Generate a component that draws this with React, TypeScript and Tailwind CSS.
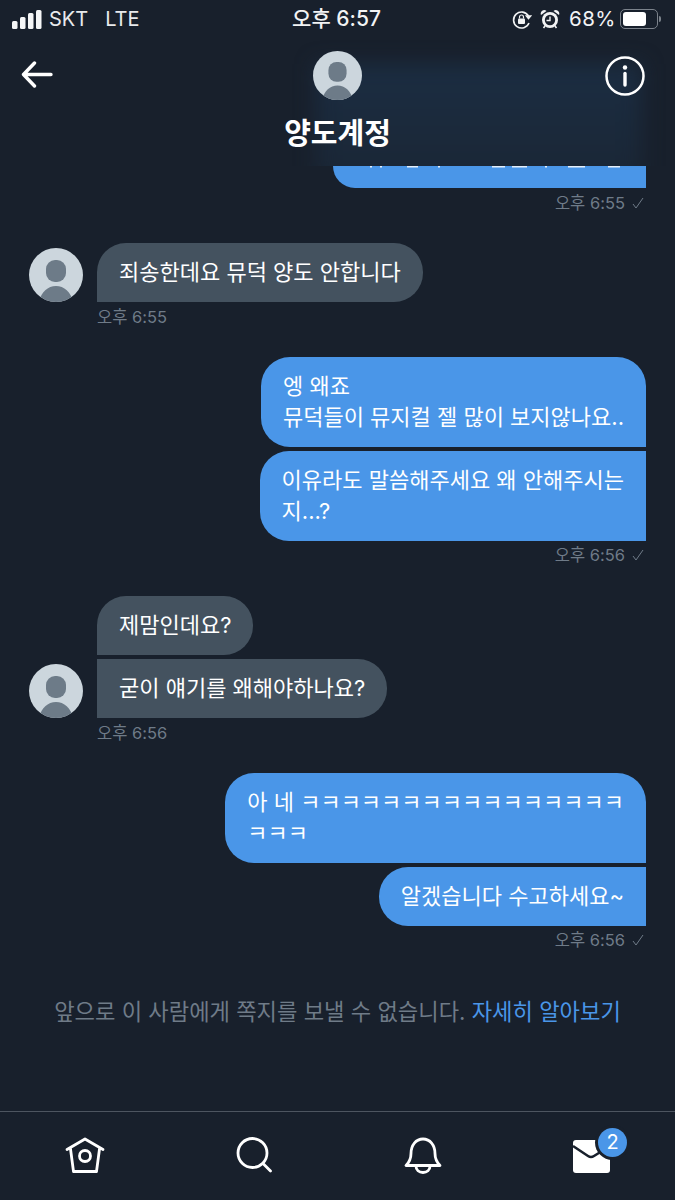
const FONT = "font-['Inter','Noto_Sans_CJK_KR',sans-serif]"

// 헤더에 가려진 윗줄 글자의 끝부분
const CLIPPED_MARKS = [
  [37, 2], [47, 2], [74, 11], [105, 2], [159, 13], [179, 15], [212, 2], [235, 17], [275, 12],
]

function Avatar({ size = 54 }: { size?: number }) {
  return (
    <svg width={size} height={size} viewBox="0 0 54 54" className="shrink-0">
      <clipPath id={`avatar-${size}`}>
        <circle cx="27" cy="27" r="27" />
      </clipPath>
      <g clipPath={`url(#avatar-${size})`}>
        <rect width="54" height="54" fill="#ccd6dd" />
        <rect x="17" y="12" width="20" height="22" rx="9" fill="#6d7b88" />
        <path d="M10 54c2-10 9-16 17-16s15 6 17 16z" fill="#6d7b88" />
      </g>
    </svg>
  )
}

function Time({ text, check, className = '' }: { text: string; check?: boolean; className?: string }) {
  return (
    <div className={`flex items-center gap-[7px] text-[16.5px] leading-[20px] text-[#6f7b88] ${className}`}>
      <span>{text}</span>
      {check && (
        <svg width="12" height="12" viewBox="0 0 12 12" fill="none" stroke="#6f7b88" strokeWidth="1" className="mr-[2px]">
          <path d="M1 7l3 4 7-10" />
        </svg>
      )}
    </div>
  )
}

function StatusBar() {
  return (
    <div className="flex h-[36px] items-center justify-between pl-[12px] pr-[14px] pt-[2px] text-white">
      <div className="flex w-[200px] items-center text-[20px] text-[#e8eaec]">
        <svg width="30" height="19" viewBox="0 0 30 19" fill="#f5f6f7">
          <rect x="0" y="11" width="5.500" height="8" rx="1.500" />
          <rect x="8" y="7" width="5.500" height="12" rx="1.500" />
          <rect x="16" y="3" width="5.500" height="16" rx="1.500" />
          <rect x="24" y="0" width="5.500" height="19" rx="1.500" />
        </svg>
        <span className="ml-[7px]">SKT</span>
        <span className="ml-[17px]">LTE</span>
      </div>
      <div className="text-[21px] font-medium text-[#f2f3f4]">오후 6:57</div>
      <div className="flex w-[200px] items-center justify-end">
        <svg width="21" height="21" viewBox="0 0 21 21" fill="none" stroke="#f2f3f4" strokeWidth="1.600">
          <path d="M17.500 7A8 8 0 1 0 18 14" />
          <path d="M15.500 7h4l-2 2.500z" fill="#f2f3f4" />
          <rect x="7" y="9.500" width="7" height="5.500" rx="1" fill="#f2f3f4" stroke="none" />
          <path d="M8.500 9.500V8a2 2 0 0 1 4 0v1.500" strokeWidth="1.200" />
        </svg>
        <svg width="20" height="20" viewBox="0 0 20 20" className="ml-[8px]">
          <circle cx="10" cy="11" r="8" fill="#f2f3f4" />
          <circle cx="10" cy="11" r="5.200" fill="#1a212c" />
          <path d="M10 7.500V11.500H6.500" stroke="#f2f3f4" strokeWidth="1.400" fill="none" />
          <path d="M1 6a3.500 3.500 0 0 1 5.500-4zM19 6a3.500 3.500 0 0 0-5.500-4z" fill="#f2f3f4" />
          <path d="M5 17l-1.500 2M15 17l1.500 2" stroke="#f2f3f4" strokeWidth="1.600" />
        </svg>
        <span className="ml-[9px] text-[20.5px] tracking-[0.5px] text-[#f2f3f4]">68%</span>
        <div className="ml-[4px] flex h-[20px] w-[38px] items-center rounded-[5px] border border-[#7b828b] p-[2px]">
          <div className="h-full w-[23px] rounded-[3px] bg-white" />
        </div>
        <div className="ml-[1px] h-[6px] w-[2px] rounded-r-sm bg-[#7b828b]" />
      </div>
    </div>
  )
}

function Header() {
  return (
    <div className="relative h-[130px]">
      <div className="absolute inset-0 overflow-hidden">
        <div className="absolute left-[316px] top-[28px] h-[120px] w-[326px] bg-gradient-to-b from-[#1b2d42] to-[#1a2635] blur-[10px]" />
      </div>
      <svg width="32" height="28" viewBox="0 0 32 28" fill="none" stroke="white" strokeWidth="3.400" strokeLinecap="round" strokeLinejoin="round" className="absolute left-[21px] top-[25px]">
        <path d="M30 13.500H3M13.500 2L2.500 13.500 13.500 25" />
      </svg>
      <svg width="40" height="40" viewBox="0 0 40 40" fill="none" stroke="white" className="absolute left-[605px] top-[20px]">
        <circle cx="20" cy="20" r="18.500" strokeWidth="2.500" />
        <circle cx="20" cy="11.500" r="2.200" fill="white" stroke="none" />
        <path d="M20 17.500V29" strokeWidth="3.400" strokeLinecap="round" />
      </svg>
      <div className="relative flex flex-col items-center pt-[15px]">
        <Avatar size={49} />
        <div className="mt-[14px] text-[29px] font-semibold leading-[40px] text-white">양도계정</div>
      </div>
    </div>
  )
}

function Bubble({ side, corners, text }: { side: 'left' | 'right'; corners: string; text: React.ReactNode }) {
  const tone = side === 'right' ? 'bg-[#4a96e8]' : 'bg-[#44525f]'
  return (
    <div className={`w-fit whitespace-nowrap px-[22px] py-[14px] text-[22px] leading-[31px] text-white ${tone} ${corners}`}>
      {text}
    </div>
  )
}

function Thread() {
  return (
    <div className="px-[29px]">
      {/* 헤더 아래로 잘린 말풍선 */}
      <div className="flex flex-col items-end">
        <div className="h-[22px] w-[313px] rounded-bl-[29px] bg-[#4a96e8]">
          <svg width="313" height="3" viewBox="0 0 313 3" fill="white" opacity="0.85" className="block">
            {CLIPPED_MARKS.map(([x, w]) => (
              <rect key={x} x={x} y="0" width={w} height="1.500" />
            ))}
          </svg>
        </div>
        <Time text="오후 6:55" check className="mt-[5px]" />
      </div>

      <div className="mt-[30px] flex items-end gap-[14px]">
        <Avatar />
        <Bubble side="left" corners="rounded-[29px] rounded-bl-none" text="죄송한데요 뮤덕 양도 안합니다" />
      </div>
      <Time text="오후 6:55" className="ml-[68px] mt-[5px]" />

      <div className="mt-[30px] flex flex-col items-end gap-[4px]">
        <Bubble
          side="right"
          corners="rounded-[29px] rounded-br-none"
          text={<>엥 왜죠<br />뮤덕들이 뮤지컬 젤 많이 보지않나요..</>}
        />
        <Bubble
          side="right"
          corners="rounded-l-[29px]"
          text={<>이유라도 말씀해주세요 왜 안해주시는<br />지...?</>}
        />
        <Time text="오후 6:56" check />
      </div>

      <div className="mt-[31px] ml-[68px] flex flex-col gap-[4px]">
        <Bubble side="left" corners="rounded-[29px] rounded-bl-none" text="제맘인데요?" />
      </div>
      <div className="mt-[4px] flex items-end gap-[14px]">
        <Avatar />
        <Bubble side="left" corners="rounded-r-[29px]" text="굳이 얘기를 왜해야하나요?" />
      </div>
      <Time text="오후 6:56" className="ml-[68px] mt-[5px]" />

      <div className="mt-[30px] flex flex-col items-end gap-[4px]">
        <Bubble
          side="right"
          corners="rounded-[29px] rounded-br-none"
          text={<>아 네 ㅋㅋㅋㅋㅋㅋㅋㅋㅋㅋㅋㅋㅋㅋㅋㅋ<br />ㅋㅋㅋ</>}
        />
        <Bubble side="right" corners="rounded-l-[29px]" text="알겠습니다 수고하세요~" />
        <Time text="오후 6:56" check />
      </div>
    </div>
  )
}

function TabBar() {
  return (
    <div className="absolute inset-x-0 bottom-0 flex h-[89px] border-t border-[#4d5560] pl-[64px] pt-[25px]">
      <svg width="42" height="38" viewBox="0 0 42 38" fill="none" stroke="white" strokeWidth="2.800" strokeLinejoin="round">
        <path d="M3 12.500L21 2l18 10.500M6.500 12l3 22.500h23l3-22.500" strokeLinecap="round" />
        <circle cx="21" cy="19" r="5.500" />
      </svg>
      <svg width="36" height="36" viewBox="0 0 36 36" fill="none" stroke="white" strokeWidth="2.800" className="ml-[130px]">
        <circle cx="16.500" cy="16" r="14.500" />
        <path d="M27 26.500L34.500 34" strokeLinecap="round" />
      </svg>
      <svg width="38" height="38" viewBox="0 0 38 38" fill="none" stroke="white" strokeWidth="2.800" strokeLinejoin="round" className="ml-[132px]">
        <path d="M2 28.500h34c-3-3-5-6-5-12C31 8 26 2 19 2S7 8 7 16.500c0 6-2 9-5 12z" />
        <path d="M12 29c0 4 3 6.500 7 6.500s7-2.500 7-6.500" />
      </svg>
      <div className="relative ml-[131px] mt-[3px] h-[33px]">
        <svg width="37" height="33" viewBox="0 0 37 33">
          <rect width="37" height="33" rx="3" fill="white" />
          <path d="M0 6l15 10c2 1.300 4 1.300 6 0l16-10" fill="none" stroke="#18202c" strokeWidth="2.500" />
        </svg>
        <div className="absolute left-[25px] top-[-12.500px] flex h-[29px] w-[29px] items-center justify-center rounded-full bg-[#4a96e8] text-[20px] text-white ring-[3px] ring-[#18202c]">
          2
        </div>
      </div>
    </div>
  )
}

export default function App() {
  return (
    <div className={`relative h-[1200px] w-[675px] overflow-hidden bg-[#18202c] ${FONT}`}>
      <StatusBar />
      <Header />
      <Thread />
      <div className="mt-[46px] text-center text-[22.200px] leading-[31px] text-[#6f7b88]">
        앞으로 이 사람에게 쪽지를 보낼 수 없습니다. <span className="text-[#4a96e8]">자세히 알아보기</span>
      </div>
      <TabBar />
    </div>
  )
}
